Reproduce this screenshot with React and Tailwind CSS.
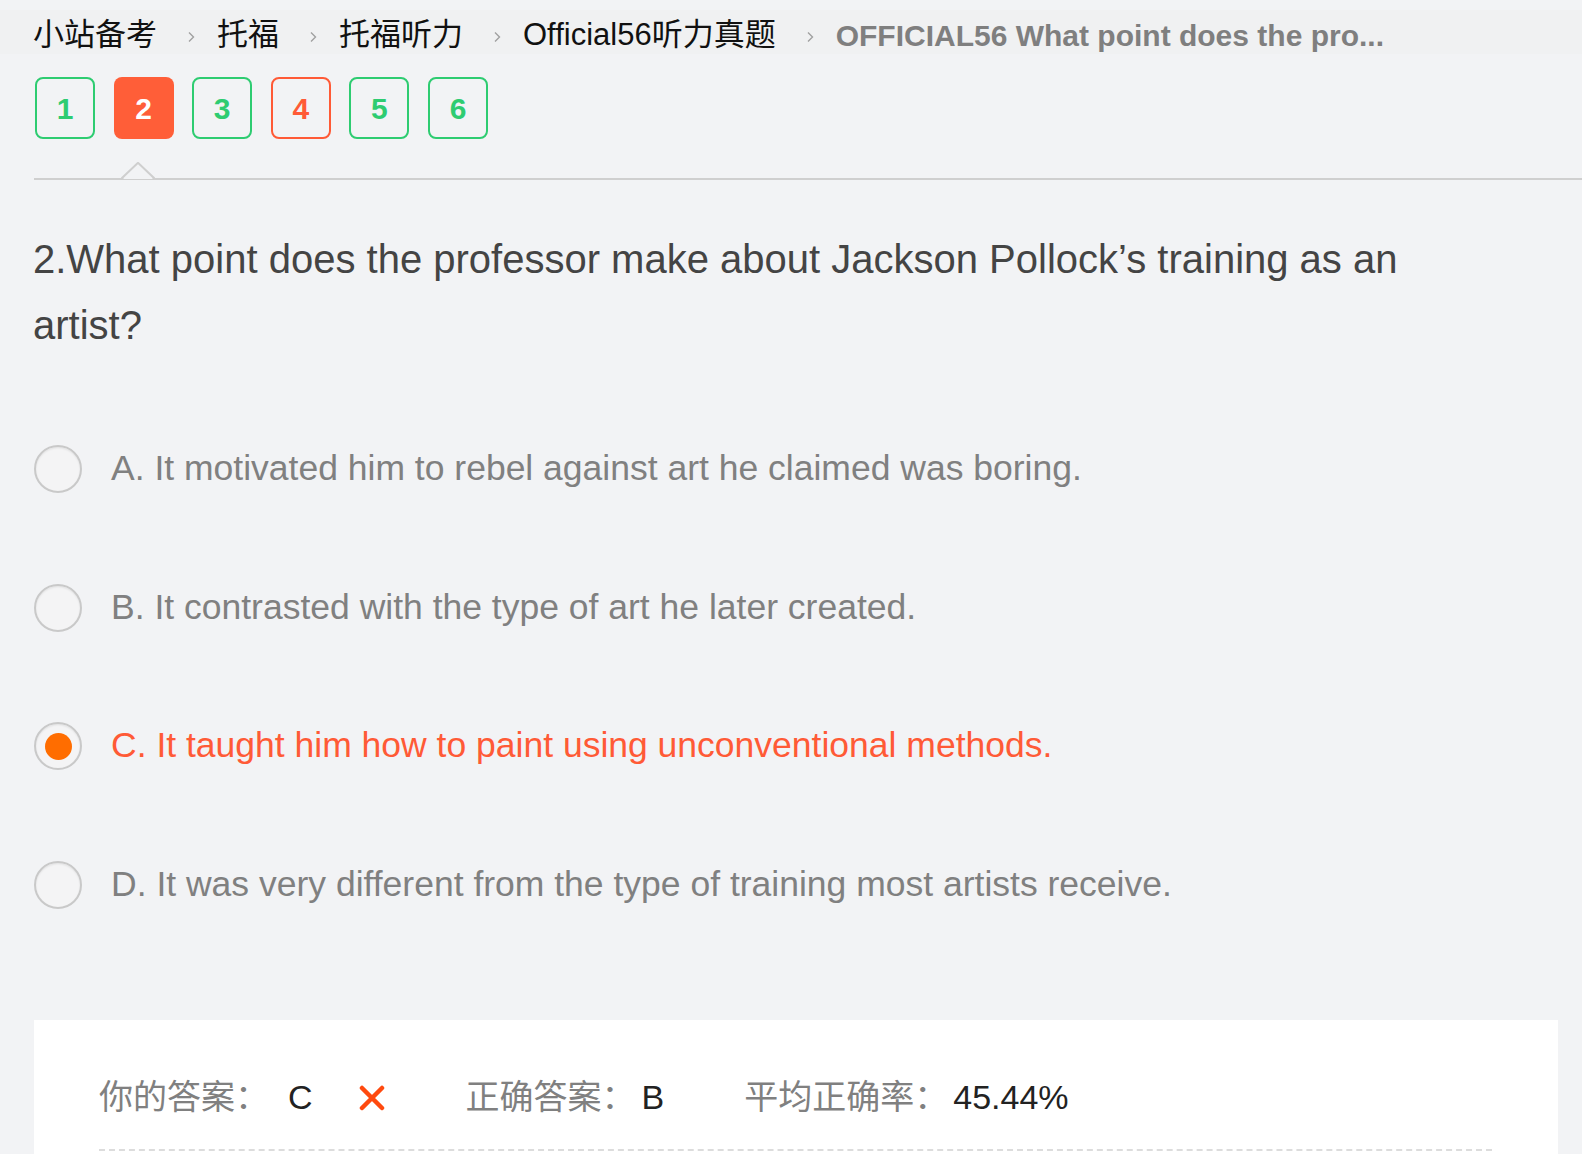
import React from 'react';

const font = { fontFamily: '"Liberation Sans", "Noto Sans CJK SC", sans-serif' };

const crumbs = ['小站备考', '托福', '托福听力', 'Official56听力真题'];

const tabs = [
  { n: 1, kind: 'ok' },
  { n: 2, kind: 'current' },
  { n: 3, kind: 'ok' },
  { n: 4, kind: 'wrong' },
  { n: 5, kind: 'ok' },
  { n: 6, kind: 'ok' },
];

const options = [
  { key: 'A', text: 'It motivated him to rebel against art he claimed was boring.' },
  { key: 'B', text: 'It contrasted with the type of art he later created.' },
  { key: 'C', text: 'It taught him how to paint using unconventional methods.', picked: true },
  { key: 'D', text: 'It was very different from the type of training most artists receive.' },
];

const Chevron = () => (
  <svg width="12" height="16" viewBox="0 0 12 16" className="ml-[28px] mr-[20px] mt-[3px]">
    <path d="M4 3.5 L8.5 8 L4 12.5" fill="none" stroke="#a0a0a0" strokeWidth="1.4" />
  </svg>
);

const Tab = ({ n, kind }) => {
  const cls = {
    ok: 'border-2 border-[#2ecc71] text-[#2ecc71]',
    wrong: 'border-2 border-[#ff5a36] text-[#ff5a36]',
    current: 'bg-[#ff5e38] text-white',
  }[kind];
  return (
    <div className={`w-[60px] h-[62px] rounded-[8px] flex items-center justify-center text-[30px] font-bold ${cls}`}>
      {n}
    </div>
  );
};

const Radio = ({ checked }) => (
  <div className="w-[48px] h-[48px] rounded-full border-2 border-[#c9c9c9] bg-[#f4f4f5] shadow-[inset_0_1px_2px_rgba(0,0,0,0.08)] flex items-center justify-center shrink-0">
    {checked && <div className="w-[27px] h-[27px] rounded-full bg-[#ff6d00]" />}
  </div>
);

export default function App() {
  return (
    <div className="h-[1154px] bg-[#f2f3f5] overflow-hidden" style={font}>
      {/* Breadcrumb */}
      <div className="mt-[10px] h-[44px] pt-[6px] bg-[#f0f1f2] flex items-center pl-[33px] text-[31px] text-[#111] whitespace-nowrap">
        {crumbs.map((c) => (
          <React.Fragment key={c}>
            <span>{c}</span>
            <Chevron />
          </React.Fragment>
        ))}
        <span className="text-[#7f7f7f] font-bold text-[30px]">
          OFFICIAL56 What point does the pro...
        </span>
      </div>

      {/* Question tabs */}
      <div className="flex gap-[18.6px] pl-[35px] mt-[23px]">
        {tabs.map((t) => (
          <Tab key={t.n} {...t} />
        ))}
      </div>

      {/* Divider with notch */}
      <div className="relative ml-[34px] mt-[39px] h-[2px] bg-[#cfcfcf]">
        <svg width="34" height="18" viewBox="0 0 34 18" className="absolute left-[87px] -top-[16px]">
          <polygon points="2,17 17,2 32,17" fill="#f2f3f5" />
          <polyline points="0,17 17,0.8 34,17" fill="none" stroke="#cfcfcf" strokeWidth="2" />
        </svg>
      </div>

      {/* Question */}
      <p className="pl-[33px] w-[1460px] mt-[46px] text-[40px] leading-[66px] text-[#444]">
        2.What point does the professor make about Jackson Pollock’s training as an artist?
      </p>

      {/* Options */}
      <div className="pl-[34px] mt-[87px] flex flex-col gap-[90.5px]">
        {options.map((o) => (
          <div key={o.key} className="flex items-center h-[48px]">
            <Radio checked={o.picked} />
            <span className={`ml-[29px] text-[35.5px] ${o.picked ? 'text-[#ff5a36]' : 'text-[#808080]'}`}>
              {o.key}. {o.text}
            </span>
          </div>
        ))}
      </div>

      {/* Result panel */}
      <div className="ml-[34px] mr-[24px] mt-[111px] bg-white pt-[58px] pl-[65px] pr-[66px] h-[200px]">
        <div className="flex items-center text-[34px] h-[40px] whitespace-nowrap">
          <span className="text-[#808080]">你的答案：</span>
          <span className="text-[#222] ml-[19px]">C</span>
          <svg width="28" height="26" viewBox="0 0 28 26" className="ml-[45px]">
            <path d="M4 3 L24 23 M24 3 L4 23" stroke="#ff4a0f" strokeWidth="4.5" strokeLinecap="round" />
          </svg>
          <span className="text-[#808080] ml-[80px]">正确答案：</span>
          <span className="text-[#222] ml-[6px]">B</span>
          <span className="text-[#808080] ml-[80px]">平均正确率：</span>
          <span className="text-[#222] ml-[5px]">45.44%</span>
        </div>
        <div className="mt-[31px] border-t-2 border-dashed border-[#dcdcdc]" />
      </div>
    </div>
  );
}
